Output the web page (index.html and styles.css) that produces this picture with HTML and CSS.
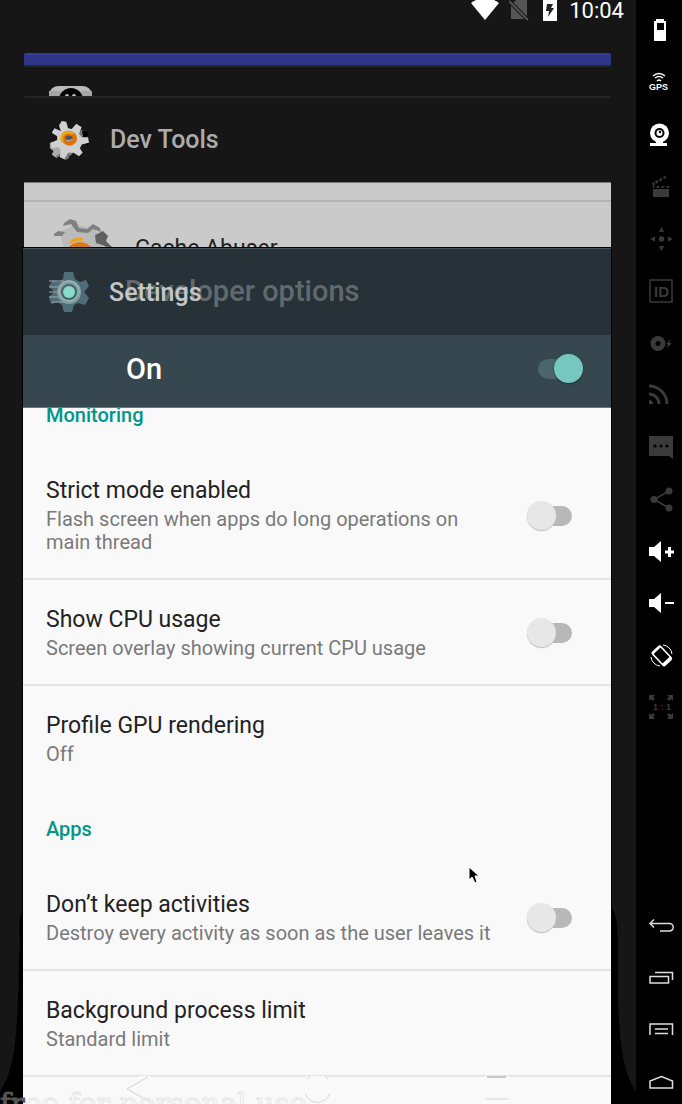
FILE: index.html
```html
<!DOCTYPE html>
<html lang="en">
<head>
<meta charset="utf-8">
<title>Recent apps</title>
<link rel="stylesheet" href="styles.css">
</head>
<body>
<svg class="defs" aria-hidden="true">
  <symbol id="cog" viewBox="0 0 44 44">
    <g fill="#777"><circle cx="18" cy="31" r="10"/><path d="M4 27l7-3 4 14-7 4-4-4 2-3zM14 42l2-8 6 0 0 8-4 2zM30 13l7-2 3 5-5 4z"/></g>
    <path fill="#000" d="M36 12l6 1 1 4-5 2zM40 25l4 0-1 3-3-1z"/>
    <path fill="#aaa" d="M1 25l7-1 2 7 8-1 1 10-4 1-2-4-3 1-3 3-4-3 2-4-4-3z"/>
    <path fill="#d0d0d0" d="M11 6l3-5 5 1 2 7 4 1 5-6 6 4-3 7 3 4 7 0 1 6-8 2-2 4 3 5-4 4-6-4-6 0-4 7-5-2 1-8-3-3-7 1-1-6 7-3 0-4-6-4 3-5 7 3z"/>
    <ellipse cx="22" cy="20" rx="9" ry="8" fill="#e07208" transform="rotate(20 22 20)"/>
    <path d="M15 24c-4-8 5-13 12-9" fill="none" stroke="#f0a810" stroke-width="3"/>
    <ellipse cx="22" cy="20" rx="4" ry="3" fill="#555"/><path d="M19 22q4 2 7-1" stroke="#ccc" fill="none"/>
  </symbol>
</svg>
<main class="screen">
  <svg class="corner corner-left" viewBox="0 0 24 200" aria-hidden="true"><path d="M24 5C18 12 19 25 20 40C18 60 19 90 17 115C15 150 11 170 0 188V200H24z"/></svg>
  <svg class="corner corner-right" viewBox="0 0 24 200" aria-hidden="true"><path d="M0 5C6 12 5 25 6 40C6 60 5 90 7 115C9 150 13 170 24 188V200H0z"/></svg>
  <header class="status">
    <svg width="28" height="24" viewBox="0 0 28 24"><path fill="#fff" d="M0 3Q14-7 28 3L14 20z"/></svg>
    <svg class="sim" width="20" height="24" viewBox="0 0 20 24"><path fill="#555" d="M2 5L7 0H18V19H2z"/><path d="M0 1L19 20" stroke="#161616" stroke-width="4"/><path d="M0 1L19 20" stroke="#555" stroke-width="2"/></svg>
    <svg class="cell" width="14" height="24" viewBox="0 0 14 24"><path fill="#fff" d="M0 0H14V21H0z"/><path fill="#222" d="M4 4H10L8 8H11L5 17L6 11H3z"/></svg>
    <time>10:04</time>
  </header>
  <div class="stack">
    <section class="card purple"></section>
    <section class="card dark hidden-app">
      <svg width="44" height="32" viewBox="0 0 44 32"><rect width="43" height="40" rx="9" fill="#bbb"/><rect y="5" width="43" height="30" fill="#a4a4a4"/><circle cx="22" cy="14" r="12"/><circle cx="18" cy="10" r="2" fill="#bbb"/><circle cx="25" cy="10" r="2" fill="#bbb"/></svg>
    </section>
    <section class="card dark dev-tools">
      <svg width="40" height="40"><use href="#cog"/></svg>
      <h2>Dev Tools</h2>
    </section>
    <section class="card peek">
      <div class="peek-top"></div>
      <div class="peek-row">
        <svg width="60" height="60" viewBox="0 0 60 60"><path fill="#bbb" d="M6 14l16-8 20 6 8 20H10z"/><g fill="#808080"><path d="M10 5l6-4 6 2 3 7 8 1 6-5 7 4 1 4-8-3-5 4-11-1-6-8-8 2z"/><path d="M0 16l4-3 7 1-3 4H0z"/></g><path fill="#606060" d="M41 17l8-4 5 5-2 5 6 6-3 1-7-3-6-2z"/><path d="M16 33a11 10 0 0 1 20 0" fill="#d0d0d0" stroke="#d77b13" stroke-width="6"/><path d="M16 25q6-6 13-3" fill="none" stroke="#f0a020" stroke-width="3"/></svg>
        <span>Cache Abuser</span>
      </div>
    </section>
    <section class="settings">
      <header class="title">
        <svg width="40" height="40" viewBox="0 0 40 40"><path fill="#4f6d78" d="M15 0h9l2 7 5 3 6-2 3 6-5 6 5 6-4 7-7-2-4 2-2 7h-8l-2-7-4-3-7 2-2-7 5-5-5-6 4-6 6 2 4-3z"/><path d="M0 9h15M0 15h12M0 20h11M0 25h13M3 30h16" stroke="#9aaaae" stroke-width="1"/><circle cx="20" cy="20" r="10" fill="#47636c" stroke="#8d9a9d" stroke-width="4"/><circle cx="20" cy="19" r="10" fill="none" stroke="#84ccc0" stroke-width="1"/><circle cx="20" cy="20" r="6" fill="#8adaca"/></svg>
        <span class="app-name">Settings</span>
        <h1>Developer options</h1>
      </header>
      <label class="master"><span>On</span><input class="switch" type="checkbox" checked></label>
      <div class="list">
        <h3 class="first">Monitoring</h3>
        <label class="row"><span class="text"><b>Strict mode enabled</b><small>Flash screen when apps do long operations on main thread</small></span><input class="switch" type="checkbox"></label>
        <label class="row"><span class="text"><b>Show CPU usage</b><small>Screen overlay showing current CPU usage</small></span><input class="switch" type="checkbox"></label>
        <div class="row last"><span class="text"><b>Profile GPU rendering</b><small>Off</small></span></div>
        <h3>Apps</h3>
        <label class="row"><span class="text"><b>Don’t keep activities</b><small>Destroy every activity as soon as the user leaves it</small></span><input class="switch" type="checkbox"></label>
        <div class="row"><span class="text"><b>Background process limit</b><small>Standard limit</small></span></div>
      </div>
    </section>
  </div>
  <svg class="nav-ghost" width="390" height="28" viewBox="0 0 390 28" fill="none" aria-hidden="true"><g stroke="#f9f9f9" stroke-width="4"><path d="M13 1H25M180 1H203M358 1H384"/></g><g stroke="#d4d4d4"><path d="M22 1L1 13L24 26M181 3A13 13 0 0 1 202 3M179 17A13 13 0 0 0 204 17"/><path stroke="#c8c8c8" stroke-width="2" d="M361 1H380"/><path d="M359 23H382"/></g></svg>
  <p class="watermark"><span>fr</span>ee for personal use</p>
  <svg class="cursor" width="12" height="18" viewBox="0 0 12 18" aria-hidden="true"><path d="M1 1V14L4 11L7 17L9 16L7 10H11z" stroke="#fff" stroke-width="1"/></svg>
</main>
<aside class="tools">
  <button aria-label="Battery"><svg viewBox="0 0 46 52"><path d="M20 15h8v2h2v20H18V17h2zM21 19v7h7v-7z" fill-rule="evenodd"/></svg></button>
  <button aria-label="GPS"><svg viewBox="0 0 46 52"><text x="13" y="34" class="gps">GPS</text><path class="thin" d="M17 20q6-5 12 0M19 22q4-3 8 0M21 25q2-2 4 0"/></svg></button>
  <button aria-label="Camera"><svg viewBox="0 0 46 52"><circle cx="23.500" cy="25" r="9.500"/><path d="M20 33h7v2h4v3H14v-3h6z"/><circle cx="23.500" cy="25" r="5" fill="#000"/><circle cx="23.500" cy="25" r="3"/><circle cx="24" cy="24" r="1.200" fill="#000"/></svg></button>
  <button aria-label="Capture" class="off"><svg viewBox="0 0 46 52"><path d="M17 29h16v8H17zM17 26h2l-1 2h-1zM21 26h3l-2 2h-2zM26 26h3l-2 2h-2zM31 26h2v1l-1 1h-2zM16 23l2-1 1 3-2 1zM19 21l3-1v2l-2 2zM23 19l3-1v2l-2 2zM27 17l3-1v2l-2 1z"/></svg></button>
  <button aria-label="Move" class="off"><svg viewBox="0 0 46 52"><circle cx="25.500" cy="27" r="2.700"/><path d="M25.500 15l2.500 5h-5zM25.500 39l2.500-5h-5zM14 27l5-2.500v5zM37 27l-5-2.500v5z"/></svg></button>
  <button aria-label="Identifiers" class="off"><svg viewBox="0 0 46 52"><rect x="14" y="16" width="22" height="22" class="thin"/><text x="18" y="33" class="id">ID</text></svg></button>
  <button aria-label="Disk" class="off"><svg viewBox="0 0 46 52"><circle cx="22" cy="27.500" r="5" fill="none" stroke="currentColor" stroke-width="5"/><path d="M35 23l-5 5h2l-1 4 5-5h-3z"/></svg></button>
  <button aria-label="Network" class="off"><svg viewBox="0 0 46 52"><path d="M13 32a4 4 0 0 1 4 4h-4z"/><path d="M13 26a10 10 0 0 1 10 10M13 18a18 18 0 0 1 18 18" fill="none" stroke="currentColor" stroke-width="3"/></svg></button>
  <button aria-label="Messages" class="off"><svg viewBox="0 0 46 52"><path d="M13 16h24v23l-4-3H13z"/><g fill="#000"><circle cx="19" cy="26" r="1.600"/><circle cx="25" cy="26" r="1.600"/><circle cx="31" cy="26" r="1.600"/></g></svg></button>
  <button aria-label="Share" class="off"><svg viewBox="0 0 46 52"><path class="thin" d="M33 19L18 27.500L33 36"/><circle cx="33" cy="19" r="3.500"/><circle cx="18" cy="27.500" r="3.500"/><circle cx="33" cy="36" r="3.500"/></svg></button>
  <button aria-label="Volume up"><svg viewBox="0 0 46 52"><path d="M13 23h5l7-6v21l-7-6h-5zM32 23h3v3.500h3v3h-3V33h-3v-3.500h-3v-3h3z"/></svg></button>
  <button aria-label="Volume down"><svg viewBox="0 0 46 52"><path d="M13 23h5l7-6v20l-7-6h-5zM29 26h9v2h-9z"/></svg></button>
  <button aria-label="Rotate"><svg viewBox="0 0 46 52"><g transform="rotate(-43 25.500 27.500)"><rect class="thin" x="20" y="19" width="11" height="18" rx="1.500"/><path d="M20 34h11v3H20zM20 19h11v2H20z"/></g><path fill="none" stroke="currentColor" d="M27 17a10 10 0 0 1 9 9M15 29a10 10 0 0 0 9 9"/></svg></button>
  <button aria-label="Actual size" class="off"><svg viewBox="0 0 46 52"><path d="M13 15h6l-2 2 2 2-2 2-2-2-2 2zM37 15h-6l2 2-2 2 2 2 2-2 2 2zM13 39h6l-2-2 2-2-2-2-2 2-2-2zM37 39h-6l2-2-2-2 2-2 2 2 2-2z"/><text x="17" y="30" class="ratio">1 : 1</text></svg></button>
  <div class="keys">
    <button aria-label="Back"><svg viewBox="0 0 46 52"><path class="thin" d="M18 19.500L14 23.500L18 27.500M14 23.500H33.500A3.500 3.500 0 0 1 33.500 31H24"/></svg></button>
    <button aria-label="Recent apps"><svg viewBox="0 0 46 52"><path class="thin" d="M14 24.500H32.500V31H14zM19 20.500H36.500V28"/></svg></button>
    <button aria-label="Menu"><svg viewBox="0 0 46 52"><path class="thin" d="M14 31V20H36.500V31M19 25H32M19 29.500H32"/></svg></button>
    <button aria-label="Home"><svg viewBox="0 0 46 52"><path class="thin" d="M14 32V25L25.500 20.500L36.500 25V32z"/></svg></button>
  </div>
</aside>
</body>
</html>
```
FILE: styles.css
```css
* { box-sizing: border-box; }
body {
  margin: 0;
  height: 100vh;
  display: flex;
  overflow: hidden;
  background: #000;
  font-family: Roboto, "Liberation Sans", sans-serif;
  color: #222;
}
h1, h2, h3, p { margin: 0; font-weight: 500; }
.defs { position: absolute; width: 0; height: 0; }

.screen {
  position: relative;
  flex: 1;
  min-width: 0;
  display: flex;
  flex-direction: column;
  overflow: hidden;
  background: #161616;
}
.corner { position: absolute; bottom: 0; width: 24px; height: 200px; }
.corner-left { left: 0; }
.corner-right { right: 0; }

.status {
  flex: none;
  height: 53px;
  padding-right: 12px;
  display: flex;
  justify-content: flex-end;
  align-items: flex-start;
  color: #fff;
}
.status .sim { margin-left: 10px; }
.status .cell { margin: 0 12px 0 14px; }
.status time { font-size: 22px; line-height: 22px; font-weight: 400; }

.stack {
  position: relative;
  flex: 1;
  display: flex;
  flex-direction: column;
  margin: 0 25px 0 23px;
}
.card { flex: none; margin-left: 1px; overflow: hidden; }
.purple {
  height: 12px;
  background: #2e3585;
  border-top: 2px solid #353d92;
  border-radius: 2px 2px 0 0;
}
.dark { background: #161616; border-top: 2px solid #262626; border-radius: 2px 2px 0 0; }
.hidden-app { height: 31px; padding: 19px 0 0 25px; }
.dev-tools {
  height: 86px;
  display: flex;
  align-items: center;
  gap: 21px;
  padding: 0 25px;
}
.dev-tools h2 { font-size: 25px; line-height: 28px; color: #acacac; }
.peek { height: 66px; background: #cacaca; border-top: 1px solid #777; }
.peek-top { height: 19px; border-bottom: 2px solid #b4b4b4; }
.peek-row { display: flex; gap: 21px; padding: 16px 30px 0; font-size: 23px; line-height: 28px; }
.peek-row span { padding-top: 17px; }

.settings { flex: 1; background: #f9f9f9; box-shadow: 0 0 0 1px #000; }
.title {
  position: relative;
  height: 87px;
  padding: 0 26px;
  display: flex;
  align-items: center;
  background: #263238;
  border-top: 1px solid #43525a;
}
.title h1 { margin-left: 36px; padding-bottom: 2px; font-size: 29px; line-height: 32px; color: #62696d; }
.app-name {
  position: absolute;
  left: 86px;
  top: 30px;
  font-size: 25px;
  line-height: 28px;
  font-weight: 500;
  color: #c4c7c8;
}
.master {
  height: 73px;
  padding: 0 28px 4px 103px;
  display: flex;
  align-items: center;
  justify-content: space-between;
  background: #37474f;
  border-bottom: 1px solid #6b777d;
  color: #fff;
  font-size: 29px;
  font-weight: 500;
}

.list { overflow: hidden; }
.list h3 {
  padding: 27px 23px 24px;
  font-size: 20px;
  line-height: 24px;
  color: #009688;
}
.list .first { margin-top: -32px; }
.row {
  display: flex;
  align-items: center;
  justify-content: space-between;
  gap: 32px;
  padding: 26px 39px 24px 23px;
  border-bottom: 2px solid #e3e3e3;
}
.row.last { border-bottom: 0; }
.text { display: flex; flex-direction: column; gap: 3px; }
.text b { font-size: 23px; line-height: 28px; font-weight: 400; }
.text small { font-size: 20px; line-height: 23px; color: #7a7a7a; }

.switch {
  appearance: none;
  position: relative;
  flex: none;
  width: 45px;
  height: 30px;
  margin: 0;
}
.switch::before {
  content: "";
  position: absolute;
  inset: 5px 0;
  border-radius: 10px;
  background: #b8b8b8;
}
.switch::after {
  content: "";
  position: absolute;
  left: 0;
  top: 0;
  width: 29px;
  height: 29px;
  border-radius: 50%;
  background: #e7e7e7;
  box-shadow: 0 1px 1px #bbb;
}
.switch:checked::before { background: #4a666c; }
.switch:checked::after { left: auto; right: 0; background: #76c7bf; box-shadow: 0 1px 2px #223238; }

.nav-ghost { position: absolute; left: 126px; bottom: 0; }
.watermark {
  position: absolute;
  left: 0;
  bottom: -17px;
  white-space: nowrap;
  font-family: "DejaVu Serif", serif;
  font-size: 29px;
  line-height: 34px;
  font-weight: 400;
  color: transparent;
  -webkit-text-stroke: 1px #e6e6e6;
}
.watermark span { color: #555; -webkit-text-stroke: 1px #555; }
.cursor { position: absolute; left: 468px; top: 866px; }

.tools {
  width: 46px;
  height: 100vh;
  padding-top: 4px;
  display: flex;
  flex-direction: column;
}
.tools button {
  display: block;
  flex: none;
  width: 46px;
  height: 52px;
  padding: 0;
  border: 0;
  background: none;
  color: #fff;
}
.tools .off { color: #3a3a3a; }
.tools svg { display: block; width: 46px; height: 52px; fill: currentColor; }
.tools .thin { fill: none; stroke: currentColor; stroke-width: 1.5; }
.keys .thin { color: #ddd; }
.keys { margin-top: auto; margin-bottom: -4px; }
.gps { font: bold 9px "Liberation Sans", sans-serif; }
.id { font: bold 15px "Liberation Sans", sans-serif; }
.ratio { font: bold 9px "Liberation Sans", sans-serif; }
```
